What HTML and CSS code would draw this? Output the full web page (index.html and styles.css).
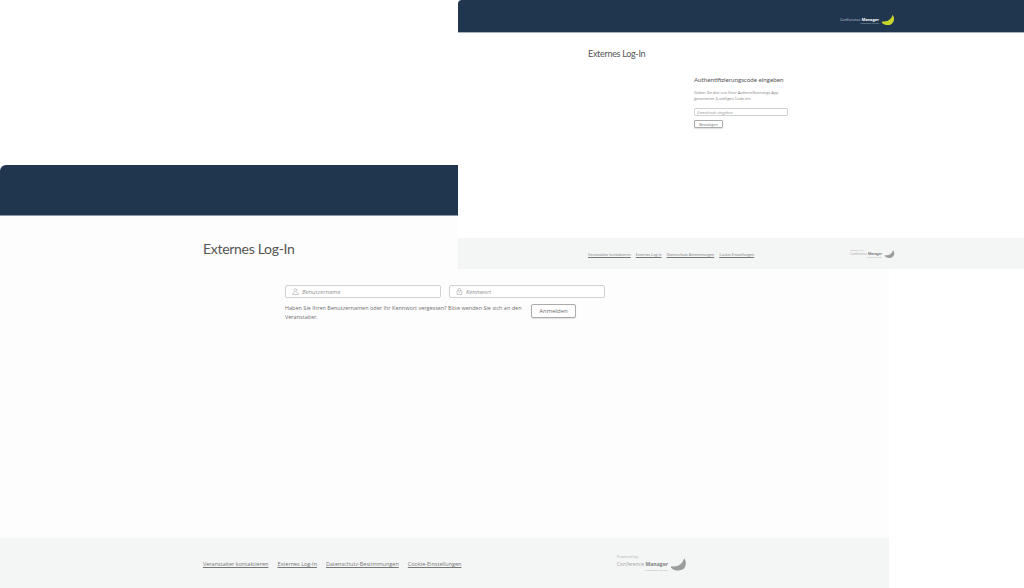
FILE: index.html
```html
<!DOCTYPE html>
<html lang="de">
<head>
<meta charset="utf-8">
<title>Externes Log-In</title>
<link rel="stylesheet" href="styles.css">
</head>
<body>
<section class="window window-large">
  <header class="topbar topbar-large"></header>
  <main class="content content-large">
    <h1 class="title-large">Externes Log-In</h1>
    <form class="login">
      <div class="login-fields">
        <div class="field">
          <svg class="field-icon" viewBox="0 0 12 12" aria-hidden="true"><circle cx="6" cy="3.6" r="2.4"/><path d="M1 11.2c.3-2.6 2-3.6 3.6-3.9M11 11.2c-.3-2.6-2-3.6-3.6-3.9M1 11.2h10"/></svg>
          <span class="placeholder">Benutzername</span>
        </div>
        <div class="field">
          <svg class="field-icon" viewBox="0 0 12 12" aria-hidden="true"><rect x="1.8" y="5" width="8.4" height="6.4" rx="1"/><path d="M3.6 5V3.2a2.4 2.4 0 0 1 4.8 0V5M6 7.2v2"/></svg>
          <span class="placeholder">Kennwort</span>
        </div>
      </div>
      <div class="login-actions">
        <p class="hint">Haben Sie Ihren Benutzernamen oder Ihr Kennwort vergessen? Bitte wenden Sie sich an den Veranstalter.</p>
        <span class="button button-large">Anmelden</span>
      </div>
    </form>
  </main>
  <footer class="footer footer-large">
    <nav class="links links-large">
      <a href="#">Veranstalter kontaktieren</a>
      <a href="#">Externes Log-In</a>
      <a href="#">Datenschutz-Bestimmungen</a>
      <a href="#">Cookie-Einstellungen</a>
    </nav>
    <div class="powered powered-large">
      <span class="powered-by">Powered by:</span>
      <div class="logo logo-grey">
        <div class="logo-text"><span class="logo-name">Conference <b>Manager</b></span><span class="logo-sub">Mitwirkend und neu</span></div>
        <svg class="logo-mark" viewBox="0 0 24 18" aria-hidden="true"><path d="M20 0C24 6 23 13 17 16.500 12 18.500 6 18 2 14 1 13 1 12 2.500 11.500 8 12.500 14 10 17 6 18.500 4 19.500 2 20 0z"/></svg>
      </div>
    </div>
  </footer>
</section>

<section class="window window-small">
  <header class="topbar topbar-small">
    <div class="logo logo-light">
      <div class="logo-text"><span class="logo-name">Conference <b>Manager</b></span><span class="logo-sub">Mitwirkend und neu</span></div>
      <svg class="logo-mark" viewBox="0 0 24 18" aria-hidden="true"><path d="M20 0C24 6 23 13 17 16.500 12 18.500 6 18 2 14 1 13 1 12 2.500 11.500 8 12.500 14 10 17 6 18.500 4 19.500 2 20 0z"/></svg>
    </div>
  </header>
  <main class="content content-small">
    <h1 class="title-small">Externes Log-In</h1>
    <div class="auth">
      <h2 class="auth-title">Authentifizierungscode eingeben</h2>
      <p class="auth-text">Geben Sie den von Ihrer Authentifizierungs-App generierten 6-stelligen Code ein.</p>
      <div class="field field-small"><span class="placeholder">Einmalcode eingeben</span></div>
      <span class="button button-small">Bestätigen</span>
    </div>
  </main>
  <footer class="footer footer-small">
    <nav class="links links-small">
      <a href="#">Veranstalter kontaktieren</a>
      <a href="#">Externes Log-In</a>
      <a href="#">Datenschutz-Bestimmungen</a>
      <a href="#">Cookie-Einstellungen</a>
    </nav>
    <div class="powered powered-small">
      <span class="powered-by">Powered by:</span>
      <div class="logo logo-grey">
        <div class="logo-text"><span class="logo-name">Conference <b>Manager</b></span><span class="logo-sub">Mitwirkend und neu</span></div>
        <svg class="logo-mark" viewBox="0 0 24 18" aria-hidden="true"><path d="M20 0C24 6 23 13 17 16.500 12 18.500 6 18 2 14 1 13 1 12 2.500 11.500 8 12.500 14 10 17 6 18.500 4 19.500 2 20 0z"/></svg>
      </div>
    </div>
  </footer>
</section>
</body>
</html>
```

FILE: styles.css
```css
* { box-sizing: border-box; }
html, body { margin: 0; padding: 0; }
body {
  position: relative;
  width: 1024px;
  height: 588px;
  overflow: hidden;
  background: #fff;
  font-family: "Open Sans", "Liberation Sans", sans-serif;
  color: #5a5a5a;
}
.window {
  position: absolute;
  display: flex;
  flex-direction: column;
  background: #fdfdfd;
  overflow: hidden;
}
.window-large { left: 0; top: 165px; width: 889px; height: 423px; border-radius: 6px 0 0 0; }
.window-small { left: 458px; top: 0; width: 566px; height: 269px; border-radius: 4px 0 0 0; background: #fff; }

.topbar { flex: none; background: #20364f; display: flex; align-items: center; justify-content: flex-end; }
.topbar-large { height: 51px; border-bottom: 1px solid #8b9aa6; }
.topbar-small { height: 33px; padding: 10px 129px 0 0; border-bottom: 1px solid #a9b3bb; }

.content { flex: 1; display: flex; flex-direction: column; }
.content-large { padding: 23px 0 0 203px; }
.content-small { padding: 14px 0 0 130px; }

.title-large, .title-small { margin: 0; font-family: Lato, "Noto Sans", sans-serif; font-weight: 400; color: #555; letter-spacing: -.3px; }
.title-large { font-size: 14px; line-height: 20px; }
.title-small { font-size: 9px; line-height: 13px; }

.login { margin: 26px 0 0 82px; width: 320px; }
.login-fields { display: flex; gap: 8px; }
.field {
  width: 156px; height: 13px;
  display: flex; align-items: center; gap: 3px;
  padding-left: 6px;
  border: 1px solid #cfd2d2; border-radius: 2px; background: #fff;
}
.field-icon { width: 7px; height: 7px; fill: none; stroke: #999; stroke-width: .9; }
.placeholder { font-size: 6px; font-style: italic; color: #949494; white-space: nowrap; }
.login-actions { display: flex; align-items: flex-start; gap: 9px; margin-top: 6px; }
.hint { margin: 0; width: 237px; font-size: 5.500px; line-height: 8.500px; color: #707070; }
.button {
  display: flex; align-items: center; justify-content: center;
  flex: none;
  border: 1px solid #aaa; border-radius: 2px; background: #fff; color: #707070;
  box-shadow: 0 1px 1px #e0e0e0;
}
.button-large { width: 45px; height: 14px; font-size: 6px; }

.footer { flex: none; background: #f4f6f6; display: flex; }
.footer-large { height: 50px; padding: 0 0 0 203px; align-items: center; justify-content: space-between; }
.footer-small { height: 31px; padding: 0 0 0 130px; align-items: center; justify-content: space-between; }
.links { display: flex; white-space: nowrap; }
.links a { color: #777; text-decoration: underline; }
.links-large { gap: 9px; font-size: 5.500px; margin-top: 2px; }
.links-small { gap: 5px; font-size: 3.600px; margin-top: 2px; }

.powered { display: flex; flex-direction: column; }
.powered-large { margin-right: 202px; gap: 1px; }
.powered-small { margin-right: 129px; }
.powered-by { color: #b0b0b0; }
.powered-large .powered-by { font-size: 3.800px; line-height: 5px; }
.powered-small .powered-by { font-size: 2.500px; line-height: 3px; }

.logo { display: flex; align-items: center; gap: 2px; }
.logo-text { display: flex; flex-direction: column; align-items: flex-end; }
.logo-name { white-space: nowrap; font-family: "Open Sans", sans-serif; }
.logo-sub { white-space: nowrap; }
.logo-light .logo-name { font-size: 3.900px; line-height: 5px; color: #c9d2da; }
.logo-light .logo-name b { color: #fff; }
.logo-light .logo-sub { font-size: 2px; line-height: 3px; color: #b8c2cb; }
.logo-light .logo-mark { width: 14px; height: 12px; fill: #c8d42a; margin-top: -2px; }
.logo-grey .logo-name { color: #a5a5a5; }
.logo-grey .logo-name b { color: #808080; }
.logo-grey .logo-sub { color: #a5a5a5; }
.logo-grey .logo-mark { fill: #9c9c9c; }
.powered-large .logo-name { font-size: 5.100px; line-height: 7px; }
.powered-large .logo-sub { font-size: 2.500px; line-height: 4px; }
.powered-large .logo-mark { width: 17px; height: 15px; margin-top: -3px; }
.powered-small .logo-name { font-size: 3.200px; line-height: 4px; }
.powered-small .logo-sub { font-size: 1.600px; line-height: 3px; }
.powered-small .logo-mark { width: 11px; height: 10px; margin-top: -3px; }

.auth { margin: 15px 0 0 106px; width: 94px; }
.auth-title { margin: 0; font-size: 6.200px; line-height: 9px; font-weight: 400; color: #555; font-family: Lato, "Noto Sans", sans-serif; white-space: nowrap; }
.auth-text { margin: 6px 0 0; font-size: 3.800px; line-height: 5.500px; color: #808080; width: 94px; }
.field-small { width: 94px; height: 8px; margin-top: 7px; padding-left: 2px; border-radius: 1px; }
.field-small .placeholder { font-size: 3.800px; }
.button-small { width: 29px; height: 8px; margin-top: 4px; font-size: 3.800px; border-radius: 1px; }
```
